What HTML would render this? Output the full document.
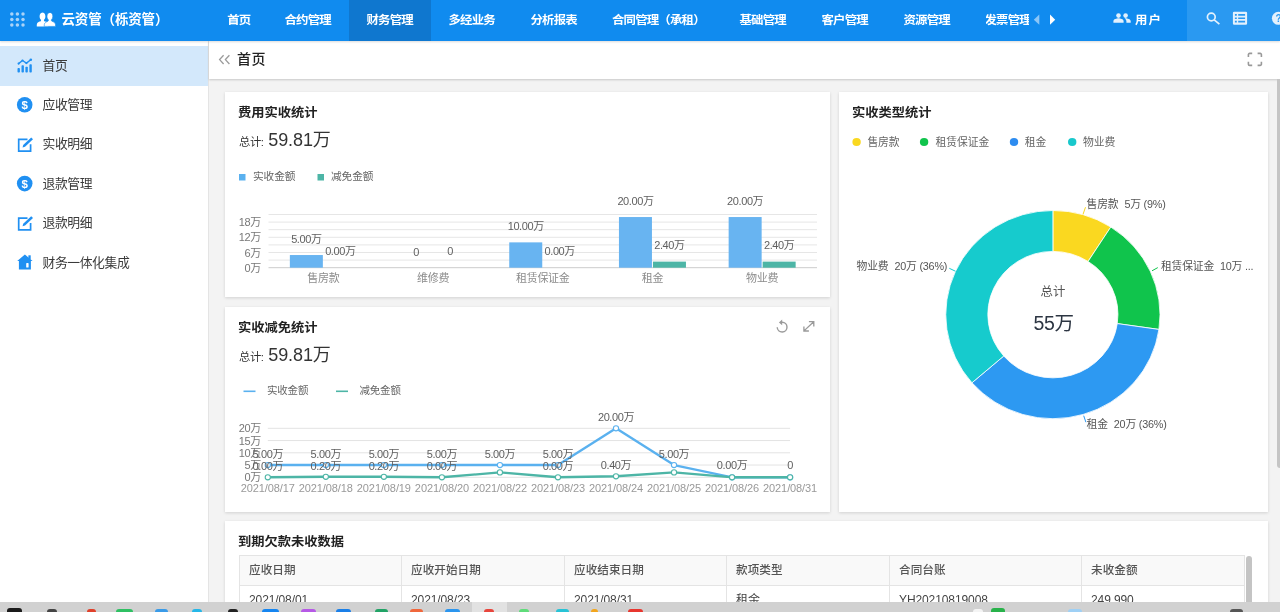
<!DOCTYPE html>
<html lang="zh-CN">
<head>
<meta charset="utf-8">
<title>云资管</title>
<style>
*{box-sizing:border-box;margin:0;padding:0}
html,body{-webkit-font-smoothing:antialiased;width:1280px;height:612px;overflow:hidden;background:#f3f3f3;font-family:"Liberation Sans","Noto Sans CJK SC",sans-serif;color:#333;}
#hdr{position:absolute;left:0;top:0;width:1280px;height:41px;background:#108bef;color:#fff;z-index:5;box-shadow:0 1px 2px rgba(0,0,0,.15)}
#hdr .nav{position:absolute;top:0;height:41px;line-height:39px;font-size:11.6px;font-weight:bold;letter-spacing:-0.75px;white-space:nowrap;text-align:center;}
#hdr .nav span{display:inline-block;transform:scaleX(1.07);transform-origin:50% 50%}
#hdr .act{background:#0f77cf;}
#hdr .right{position:absolute;left:1187px;top:0;width:93px;height:41px;background:#2a99f1;}
#brand{position:absolute;left:61.5px;top:0;height:41px;line-height:39px;font-size:13.5px;font-weight:bold;letter-spacing:-0.15px;white-space:nowrap}
#side{position:absolute;left:0;top:41px;width:208px;height:571px;background:#fff;}
#side .it{position:absolute;left:0;width:208px;height:39.5px;line-height:39.5px;padding-left:42.5px;font-size:12.8px;color:#3a3a3a;letter-spacing:-0.4px;white-space:nowrap}
#side .it.on{background:#d3e8fb;}
#sideshadow{position:absolute;left:208px;top:41px;width:1px;height:571px;background:#e4e4e4}
#tbar{position:absolute;left:209px;top:41px;width:1071px;height:38px;background:#fff;box-shadow:0 1px 2px rgba(0,0,0,.18);}
#tbar .t{position:absolute;left:28px;top:0;line-height:37px;font-size:14px;font-weight:500;color:#222;letter-spacing:0.5px}
#tbar .c{position:absolute;left:10px;top:0;line-height:34px;font-size:15px;color:#999;}
.card{position:absolute;background:#fff;box-shadow:0 1px 3px rgba(0,0,0,.14);}
.card h3{position:absolute;left:12.9px;top:11.5px;font-size:12.4px;font-weight:bold;color:#222;letter-spacing:0;transform:scaleX(1.07);transform-origin:0 50%;white-space:nowrap;line-height:18px}
.tot{position:absolute;left:14px;top:34.5px;white-space:nowrap;line-height:26px;color:#333}
.tot small{font-size:11.3px;letter-spacing:-0.4px;margin-right:2px}
.tot b{font-weight:normal;font-size:18px;letter-spacing:-0.1px}
svg text{font-family:"Liberation Sans","Noto Sans CJK SC",sans-serif}
#tbl{position:absolute;left:14px;top:34px;width:1014px;height:70px}
#tbl .th{position:absolute;top:0;height:31px;line-height:28px;padding-left:9px;background:#f9f9f9;border:1px solid #e4e4e4;font-size:11.6px;color:#555;font-weight:500;letter-spacing:0.05px;white-space:nowrap}
#tbl .td{position:absolute;top:30px;height:40px;line-height:29px;padding-left:9px;background:#fff;border:1px solid #e4e4e4;font-size:12px;color:#444;white-space:nowrap;letter-spacing:-0.1px}
#tscroll{position:absolute;left:1007px;top:1px;width:6px;height:70px;background:#c4c4c4;border-radius:3px 3px 0 0}
#root{position:absolute;left:0;top:0;width:1280px;height:612px;overflow:hidden;will-change:transform;transform:translateZ(0)}
#scroll{position:absolute;left:1276.7px;top:79px;width:4px;height:389px;background:#c5c5c5;border-radius:0 0 0 3px}
#task{position:absolute;left:0;top:602.4px;width:1280px;height:10px;background:#d1d1d1}
#task i{position:absolute;bottom:0;border-radius:3px 3px 0 0}
#task b{position:absolute;left:472px;top:0;width:35px;height:10px;background:#e2e2e2}
</style>
</head>
<body>
<div id="root">
<div id="hdr">
  <div id="brand">云资管（栎资管）</div>
  <div class="nav" style="left:212px;width:54px"><span>首页</span></div>
  <div class="nav" style="left:267px;width:82px"><span>合约管理</span></div>
  <div class="nav act" style="left:349px;width:82px"><span>财务管理</span></div>
  <div class="nav" style="left:431px;width:82px"><span>多经业务</span></div>
  <div class="nav" style="left:513px;width:82px"><span>分析报表</span></div>
  <div class="nav" style="left:597px;width:122px"><span>合同管理（承租）</span></div>
  <div class="nav" style="left:722px;width:82px"><span>基础管理</span></div>
  <div class="nav" style="left:804px;width:82px"><span>客户管理</span></div>
  <div class="nav" style="left:886px;width:82px"><span>资源管理</span></div>
  <div class="nav" style="left:985.5px;width:43.5px;overflow:hidden;text-align:left"><span>发票管理</span></div>
  <div class="nav" style="left:1135px;width:30px;text-align:left"><span style="letter-spacing:1px;transform-origin:0 50%">用户</span></div>
  <div class="right"></div>
  <svg id="hicons" width="1280" height="41" viewBox="0 0 1280 41" style="position:absolute;left:0;top:0;pointer-events:none">
    <g fill="#a9d3f8">
      <circle cx="11.8" cy="14.1" r="1.75"/><circle cx="17.4" cy="14.1" r="1.75"/><circle cx="23" cy="14.1" r="1.75"/>
      <circle cx="11.8" cy="19.5" r="1.75"/><circle cx="17.4" cy="19.5" r="1.75"/><circle cx="23" cy="19.5" r="1.75"/>
      <circle cx="11.8" cy="24.9" r="1.75"/><circle cx="17.4" cy="24.9" r="1.75"/><circle cx="23" cy="24.9" r="1.75"/>
    </g>
    <g fill="#fff">
      <path d="M42.2,12.4c2,0 3.2,1.6 3.2,3.8c0,1.6 -0.6,2.9 -1.5,3.7c0,0.9 0.4,1.3 1.4,1.7c2.2,0.9 2.9,1.6 2.9,4.8h-11.4c0,-3.2 0.7,-3.9 2.9,-4.8c1,-0.4 1.4,-0.8 1.4,-1.7c-0.9,-0.8 -1.5,-2.1 -1.5,-3.7c0,-2.2 1.2,-3.8 3.6,-3.8z"/>
      <path d="M49.6,12.4c2,0 3.2,1.6 3.2,3.8c0,1.6 -0.6,2.9 -1.5,3.7c0,0.9 0.4,1.3 1.4,1.7c2.2,0.9 2.9,1.6 2.9,4.8h-11.4c0,-3.2 0.7,-3.9 2.9,-4.8c1,-0.4 1.4,-0.8 1.4,-1.7c-0.9,-0.8 -1.5,-2.1 -1.5,-3.7c0,-2.2 1.2,-3.8 3.6,-3.8z" stroke="#108bef" stroke-width="0.6"/>
    </g>
    <path d="M1039.3,14.6 L1039.3,24.8 L1033.8,19.7 Z" fill="#8cc6f7"/>
    <path d="M1050,14.6 L1050,24.8 L1055.2,19.7 Z" fill="#fff"/>
    <g fill="#e3f1fd">
      <circle cx="1118.5" cy="15.6" r="2.3"/><circle cx="1125.6" cy="15.6" r="2.3"/>
      <path d="M1113.4,22.7v-1.6c0,-1.9 3.4,-2.8 5.1,-2.8c1.7,0 5.1,0.9 5.1,2.8v1.6z"/>
      <path d="M1125.6,18.3c-0.3,0 -0.6,0 -0.9,0.1c1,0.7 1.7,1.6 1.7,2.7v1.6h4.3v-1.6c0,-1.9 -3.4,-2.8 -5.1,-2.8z"/>
    </g>
    <g fill="none" stroke="#e3f1fd" stroke-width="1.7">
      <circle cx="1211.3" cy="17" r="3.9"/><path d="M1214.2,19.9 L1219.4,24.2" stroke-linecap="butt"/>
    </g>
    <path fill="#e3f1fd" fill-rule="evenodd" d="M1234.2,11.8h11.6a1.3,1.3 0 0 1 1.3,1.3v10.4a1.3,1.3 0 0 1 -1.3,1.3h-11.6a1.3,1.3 0 0 1 -1.3,-1.3v-10.4a1.3,1.3 0 0 1 1.3,-1.3z M1234.9,14h1.9v1.7h-1.9z M1238.2,14h6.9v1.7h-6.9z M1234.9,17.4h1.9v1.7h-1.9z M1238.2,17.4h6.9v1.7h-6.9z M1234.9,20.8h1.9v1.7h-1.9z M1238.2,20.8h6.9v1.7h-6.9z"/>
    <circle cx="1278.4" cy="18.3" r="6.5" fill="#e3f1fd"/>
    <text x="1275.6" y="22.2" font-size="10" font-weight="bold" fill="#2a99f1">?</text>
  </svg>
</div>
<div id="side">
  <div class="it on" style="top:5px">首页</div>
  <div class="it" style="top:44px">应收管理</div>
  <div class="it" style="top:83px">实收明细</div>
  <div class="it" style="top:123px">退款管理</div>
  <div class="it" style="top:162px">退款明细</div>
  <div class="it" style="top:202px">财务一体化集成</div>
<svg width="60" height="571" viewBox="0 41 60 571" style="position:absolute;left:0;top:0"><g fill="#2090f2"><rect x="17.5" y="68.1" width="2.4" height="4.5" rx="0.8"/><rect x="21.5" y="65.2" width="2.4" height="7.4" rx="0.8"/><rect x="25.4" y="66.7" width="2.4" height="5.9" rx="0.8"/><rect x="29.4" y="64.2" width="2.4" height="8.4" rx="0.8"/></g><path d="M18.6,63.6 L22.5,60.5 L26.4,63.1 L30.8,59.7" fill="none" stroke="#2090f2" stroke-width="1.4" stroke-linejoin="round" stroke-linecap="round"/><circle cx="18.6" cy="63.6" r="1.1" fill="#2090f2"/><circle cx="22.5" cy="60.5" r="1.1" fill="#2090f2"/><circle cx="26.4" cy="63.1" r="1.1" fill="#2090f2"/><circle cx="30.8" cy="59.7" r="1.3" fill="#2090f2"/><circle cx="24.7" cy="104.8" r="7.8" fill="#2090f2"/><text x="24.7" y="108.89999999999999" font-size="11.5" font-weight="bold" fill="#fff" text-anchor="middle">$</text><path d="M27.5,139.4 H18.7 V151.10000000000002 H30.6 V144.20000000000002" fill="none" stroke="#2090f2" stroke-width="1.7"/><path d="M22.6,147.4 L23.2,145.0 L31.2,137.4 L33,139.20000000000002 L25,146.8 Z" fill="#2090f2"/><circle cx="24.7" cy="183.6" r="7.8" fill="#2090f2"/><text x="24.7" y="187.7" font-size="11.5" font-weight="bold" fill="#fff" text-anchor="middle">$</text><path d="M27.5,218.2 H18.7 V229.9 H30.6 V223.0" fill="none" stroke="#2090f2" stroke-width="1.7"/><path d="M22.6,226.2 L23.2,223.79999999999998 L31.2,216.2 L33,218.0 L25,225.6 Z" fill="#2090f2"/><path d="M24.9,254.5 L32.6,261.1 L30.9,261.1 L30.9,269.4 L18.9,269.4 L18.9,261.1 L17.2,261.1 Z" fill="#2090f2"/><rect x="28.4" y="255.3" width="2.3" height="4" fill="#2090f2"/><rect x="26.2" y="263.1" width="2.4" height="4.4" rx="0.6" fill="#fff"/></svg>
</div>
<div id="sideshadow"></div>
<div id="tbar"><svg width="14" height="12" viewBox="0 0 14 12" style="position:absolute;left:9px;top:13px"><path d="M5.6,1.2 L1.6,5.6 L5.6,10 M11.4,1.2 L7.4,5.6 L11.4,10" fill="none" stroke="#9a9a9a" stroke-width="1.3"/></svg><span class="t">首页</span><svg width="16" height="15" viewBox="0 0 16 15" style="position:absolute;left:1037.5px;top:10.7px"><path d="M1.4,5 V2.6 a1.2,1.2 0 0 1 1.2,-1.2 H5.2 M10.6,1.4 H13.2 a1.2,1.2 0 0 1 1.2,1.2 V5 M14.4,9.8 V12.2 a1.2,1.2 0 0 1 -1.2,1.2 H10.6 M5.2,13.4 H2.6 a1.2,1.2 0 0 1 -1.2,-1.2 V9.8" fill="none" stroke="#999" stroke-width="1.6"/></svg></div>

<div class="card" id="c1" style="left:225px;top:92px;width:605px;height:205px">
  <h3>费用实收统计</h3>
  <div class="tot"><small>总计: </small><b>59.81万</b></div>
<svg width="605" height="205" viewBox="0 0 605 205" style="position:absolute;left:0;top:0">
<rect x="14" y="82" width="6.5" height="6.5" fill="#5ab1ef"/>
<text x="28" y="87.9" font-size="10.7" fill="#666" letter-spacing="-0.1">实收金额</text>
<rect x="92.5" y="82" width="6.5" height="6.5" fill="#4db5a6"/>
<text x="106" y="87.9" font-size="10.7" fill="#666" letter-spacing="-0.1">减免金额</text>
<line x1="43.5" x2="592" y1="175.70" y2="175.70" stroke="#ccc" stroke-width="1"/>
<line x1="43.5" x2="592" y1="168.10" y2="168.10" stroke="#e6e6e6" stroke-width="1"/>
<line x1="43.5" x2="592" y1="160.50" y2="160.50" stroke="#e6e6e6" stroke-width="1"/>
<line x1="43.5" x2="592" y1="152.90" y2="152.90" stroke="#e6e6e6" stroke-width="1"/>
<line x1="43.5" x2="592" y1="145.30" y2="145.30" stroke="#e6e6e6" stroke-width="1"/>
<line x1="43.5" x2="592" y1="137.70" y2="137.70" stroke="#e6e6e6" stroke-width="1"/>
<line x1="43.5" x2="592" y1="130.11" y2="130.11" stroke="#e6e6e6" stroke-width="1"/>
<line x1="43.5" x2="592" y1="122.51" y2="122.51" stroke="#e6e6e6" stroke-width="1"/>
<text x="36" y="179.70" font-size="11" fill="#777" text-anchor="end" letter-spacing="-0.3">0万</text>
<text x="36" y="164.50" font-size="11" fill="#777" text-anchor="end" letter-spacing="-0.3">6万</text>
<text x="36" y="149.30" font-size="11" fill="#777" text-anchor="end" letter-spacing="-0.3">12万</text>
<text x="36" y="134.11" font-size="11" fill="#777" text-anchor="end" letter-spacing="-0.3">18万</text>
<text x="98.35" y="189.9" font-size="11" fill="#8c8c8c" text-anchor="middle" letter-spacing="-0.3">售房款</text>
<rect x="64.85" y="163.03" width="33" height="12.66" fill="#68b4f1"/>
<text x="81.35" y="150.84" font-size="11" fill="#606060" text-anchor="middle" letter-spacing="-0.4">5.00万</text>
<text x="115.35" y="163.20" font-size="11" fill="#606060" text-anchor="middle" letter-spacing="-0.4">0.00万</text>
<text x="208.05" y="189.9" font-size="11" fill="#8c8c8c" text-anchor="middle" letter-spacing="-0.3">维修费</text>
<text x="191.05" y="163.50" font-size="11" fill="#606060" text-anchor="middle" letter-spacing="-0.4">0</text>
<text x="225.05" y="163.20" font-size="11" fill="#606060" text-anchor="middle" letter-spacing="-0.4">0</text>
<text x="317.75" y="189.9" font-size="11" fill="#8c8c8c" text-anchor="middle" letter-spacing="-0.3">租赁保证金</text>
<rect x="284.25" y="150.37" width="33" height="25.33" fill="#68b4f1"/>
<text x="300.75" y="138.17" font-size="11" fill="#606060" text-anchor="middle" letter-spacing="-0.4">10.00万</text>
<text x="334.75" y="163.20" font-size="11" fill="#606060" text-anchor="middle" letter-spacing="-0.4">0.00万</text>
<text x="427.45" y="189.9" font-size="11" fill="#8c8c8c" text-anchor="middle" letter-spacing="-0.3">租金</text>
<rect x="393.95" y="125.04" width="33" height="50.66" fill="#68b4f1"/>
<rect x="427.95" y="169.62" width="33" height="6.08" fill="#4db5a6"/>
<text x="410.45" y="112.84" font-size="11" fill="#606060" text-anchor="middle" letter-spacing="-0.4">20.00万</text>
<text x="444.45" y="157.12" font-size="11" fill="#606060" text-anchor="middle" letter-spacing="-0.4">2.40万</text>
<text x="537.15" y="189.9" font-size="11" fill="#8c8c8c" text-anchor="middle" letter-spacing="-0.3">物业费</text>
<rect x="503.65" y="125.04" width="33" height="50.66" fill="#68b4f1"/>
<rect x="537.65" y="169.62" width="33" height="6.08" fill="#4db5a6"/>
<text x="520.15" y="112.84" font-size="11" fill="#606060" text-anchor="middle" letter-spacing="-0.4">20.00万</text>
<text x="554.15" y="157.12" font-size="11" fill="#606060" text-anchor="middle" letter-spacing="-0.4">2.40万</text>
</svg>
</div>
<div class="card" id="c2" style="left:225px;top:307px;width:605px;height:205px">
  <h3>实收减免统计</h3>
  <div class="tot"><small>总计: </small><b>59.81万</b></div>
<svg width="605" height="205" viewBox="0 0 605 205" style="position:absolute;left:0;top:0">
<line x1="18.5" x2="30.5" y1="84.3" y2="84.3" stroke="#5ab1ef" stroke-width="1.6"/>
<text x="42" y="87" font-size="10.5" fill="#666" letter-spacing="-0.2">实收金额</text>
<line x1="111" x2="123" y1="84.3" y2="84.3" stroke="#4db5a6" stroke-width="1.6"/>
<text x="134.5" y="87" font-size="10.5" fill="#666" letter-spacing="-0.2">减免金额</text>
<line x1="42.8" x2="565.1" y1="170.30" y2="170.30" stroke="#e3e3e3" stroke-width="1"/>
<text x="36" y="174.30" font-size="11" fill="#777" text-anchor="end" letter-spacing="-0.3">0万</text>
<line x1="42.8" x2="565.1" y1="158.05" y2="158.05" stroke="#e3e3e3" stroke-width="1"/>
<text x="36" y="162.05" font-size="11" fill="#777" text-anchor="end" letter-spacing="-0.3">5万</text>
<line x1="42.8" x2="565.1" y1="145.80" y2="145.80" stroke="#e3e3e3" stroke-width="1"/>
<text x="36" y="149.80" font-size="11" fill="#777" text-anchor="end" letter-spacing="-0.3">10万</text>
<line x1="42.8" x2="565.1" y1="133.55" y2="133.55" stroke="#e3e3e3" stroke-width="1"/>
<text x="36" y="137.55" font-size="11" fill="#777" text-anchor="end" letter-spacing="-0.3">15万</text>
<line x1="42.8" x2="565.1" y1="121.30" y2="121.30" stroke="#e3e3e3" stroke-width="1"/>
<text x="36" y="125.30" font-size="11" fill="#777" text-anchor="end" letter-spacing="-0.3">20万</text>
<text x="42.80" y="185.3" font-size="11" fill="#999" text-anchor="middle" letter-spacing="-0.1">2021/08/17</text>
<text x="100.83" y="185.3" font-size="11" fill="#999" text-anchor="middle" letter-spacing="-0.1">2021/08/18</text>
<text x="158.87" y="185.3" font-size="11" fill="#999" text-anchor="middle" letter-spacing="-0.1">2021/08/19</text>
<text x="216.90" y="185.3" font-size="11" fill="#999" text-anchor="middle" letter-spacing="-0.1">2021/08/20</text>
<text x="274.93" y="185.3" font-size="11" fill="#999" text-anchor="middle" letter-spacing="-0.1">2021/08/22</text>
<text x="332.97" y="185.3" font-size="11" fill="#999" text-anchor="middle" letter-spacing="-0.1">2021/08/23</text>
<text x="391.00" y="185.3" font-size="11" fill="#999" text-anchor="middle" letter-spacing="-0.1">2021/08/24</text>
<text x="449.03" y="185.3" font-size="11" fill="#999" text-anchor="middle" letter-spacing="-0.1">2021/08/25</text>
<text x="507.07" y="185.3" font-size="11" fill="#999" text-anchor="middle" letter-spacing="-0.1">2021/08/26</text>
<text x="565.10" y="185.3" font-size="11" fill="#999" text-anchor="middle" letter-spacing="-0.1">2021/08/31</text>
<polyline points="42.80,158.05 100.83,158.05 158.87,158.05 216.90,158.05 274.93,158.05 332.97,158.05 391.00,121.30 449.03,158.05 507.07,170.30 565.10,170.30" fill="none" stroke="#5ab1ef" stroke-width="2.4" stroke-linejoin="round"/>
<polyline points="42.80,170.30 100.83,169.81 158.87,169.81 216.90,170.30 274.93,165.40 332.97,170.30 391.00,169.32 449.03,165.40 507.07,170.30 565.10,170.30" fill="none" stroke="#4db5a6" stroke-width="2.4" stroke-linejoin="round"/>
<circle cx="42.80" cy="158.05" r="2.6" fill="#fff" stroke="#5ab1ef" stroke-width="1.1"/>
<circle cx="100.83" cy="158.05" r="2.6" fill="#fff" stroke="#5ab1ef" stroke-width="1.1"/>
<circle cx="158.87" cy="158.05" r="2.6" fill="#fff" stroke="#5ab1ef" stroke-width="1.1"/>
<circle cx="216.90" cy="158.05" r="2.6" fill="#fff" stroke="#5ab1ef" stroke-width="1.1"/>
<circle cx="274.93" cy="158.05" r="2.6" fill="#fff" stroke="#5ab1ef" stroke-width="1.1"/>
<circle cx="332.97" cy="158.05" r="2.6" fill="#fff" stroke="#5ab1ef" stroke-width="1.1"/>
<circle cx="391.00" cy="121.30" r="2.6" fill="#fff" stroke="#5ab1ef" stroke-width="1.1"/>
<circle cx="449.03" cy="158.05" r="2.6" fill="#fff" stroke="#5ab1ef" stroke-width="1.1"/>
<circle cx="507.07" cy="170.30" r="2.6" fill="#fff" stroke="#5ab1ef" stroke-width="1.1"/>
<circle cx="565.10" cy="170.30" r="2.6" fill="#fff" stroke="#5ab1ef" stroke-width="1.1"/>
<circle cx="42.80" cy="170.30" r="2.6" fill="#fff" stroke="#4db5a6" stroke-width="1.1"/>
<circle cx="100.83" cy="169.81" r="2.6" fill="#fff" stroke="#4db5a6" stroke-width="1.1"/>
<circle cx="158.87" cy="169.81" r="2.6" fill="#fff" stroke="#4db5a6" stroke-width="1.1"/>
<circle cx="216.90" cy="170.30" r="2.6" fill="#fff" stroke="#4db5a6" stroke-width="1.1"/>
<circle cx="274.93" cy="165.40" r="2.6" fill="#fff" stroke="#4db5a6" stroke-width="1.1"/>
<circle cx="332.97" cy="170.30" r="2.6" fill="#fff" stroke="#4db5a6" stroke-width="1.1"/>
<circle cx="391.00" cy="169.32" r="2.6" fill="#fff" stroke="#4db5a6" stroke-width="1.1"/>
<circle cx="449.03" cy="165.40" r="2.6" fill="#fff" stroke="#4db5a6" stroke-width="1.1"/>
<circle cx="507.07" cy="170.30" r="2.6" fill="#fff" stroke="#4db5a6" stroke-width="1.1"/>
<circle cx="565.10" cy="170.30" r="2.6" fill="#fff" stroke="#4db5a6" stroke-width="1.1"/>
<text x="42.80" y="151.05" font-size="11" fill="#606060" text-anchor="middle" letter-spacing="-0.4">5.00万</text>
<text x="42.80" y="163.30" font-size="11" fill="#606060" text-anchor="middle" letter-spacing="-0.4">0.00万</text>
<text x="100.83" y="151.05" font-size="11" fill="#606060" text-anchor="middle" letter-spacing="-0.4">5.00万</text>
<text x="100.83" y="162.81" font-size="11" fill="#606060" text-anchor="middle" letter-spacing="-0.4">0.20万</text>
<text x="158.87" y="151.05" font-size="11" fill="#606060" text-anchor="middle" letter-spacing="-0.4">5.00万</text>
<text x="158.87" y="162.81" font-size="11" fill="#606060" text-anchor="middle" letter-spacing="-0.4">0.20万</text>
<text x="216.90" y="151.05" font-size="11" fill="#606060" text-anchor="middle" letter-spacing="-0.4">5.00万</text>
<text x="216.90" y="163.30" font-size="11" fill="#606060" text-anchor="middle" letter-spacing="-0.4">0.00万</text>
<text x="274.93" y="151.05" font-size="11" fill="#606060" text-anchor="middle" letter-spacing="-0.4">5.00万</text>
<text x="332.97" y="151.05" font-size="11" fill="#606060" text-anchor="middle" letter-spacing="-0.4">5.00万</text>
<text x="332.97" y="163.30" font-size="11" fill="#606060" text-anchor="middle" letter-spacing="-0.4">0.00万</text>
<text x="391.00" y="114.30" font-size="11" fill="#606060" text-anchor="middle" letter-spacing="-0.4">20.00万</text>
<text x="391.00" y="162.32" font-size="11" fill="#606060" text-anchor="middle" letter-spacing="-0.4">0.40万</text>
<text x="449.03" y="151.05" font-size="11" fill="#606060" text-anchor="middle" letter-spacing="-0.4">5.00万</text>
<text x="507.07" y="162.30" font-size="11" fill="#606060" text-anchor="middle" letter-spacing="-0.4">0.00万</text>
<text x="565.10" y="162.30" font-size="11" fill="#606060" text-anchor="middle" letter-spacing="-0.4">0</text>
<path d="M557,15.2 A4.9,4.9 0 1 1 552.2,20.3" fill="none" stroke="#9a9a9a" stroke-width="1.4"/>
<path d="M553.9,15.4 L557.2,12.5 L557.2,18.3 Z" fill="#9a9a9a"/>
<path d="M579,23.9 L588.7,14.7 M583.9,14.7 H588.8 V19.4 M578.9,19.4 V24 H583.9" fill="none" stroke="#9a9a9a" stroke-width="1.3"/>
</svg>
</div>
<div class="card" id="c3" style="left:839px;top:92px;width:429px;height:420px">
  <h3>实收类型统计</h3>
<svg width="429" height="420" viewBox="0 0 429 420" style="position:absolute;left:0;top:0">
<ellipse cx="17.6" cy="49.9" rx="4.2" ry="4" fill="#fad820"/>
<text x="28.4" y="53.5" font-size="10.8" fill="#666" letter-spacing="-0.1">售房款</text>
<ellipse cx="85.1" cy="49.9" rx="4.2" ry="4" fill="#10c44c"/>
<text x="96.6" y="53.5" font-size="10.8" fill="#666" letter-spacing="-0.1">租赁保证金</text>
<ellipse cx="175" cy="49.9" rx="4.2" ry="4" fill="#2d8cf0"/>
<text x="185.8" y="53.5" font-size="10.8" fill="#666" letter-spacing="-0.1">租金</text>
<ellipse cx="233.2" cy="49.9" rx="4.2" ry="4" fill="#19c8cc"/>
<text x="244" y="53.5" font-size="10.8" fill="#666" letter-spacing="-0.1">物业费</text>
<g transform="translate(213.9,222.6) scale(1.029,1)">
<path d="M0.00,-104.10 A104.1,104.1 0 0 1 56.28,-87.57 L34.17,-53.17 A63.2,63.2 0 0 0 0.00,-63.20 Z" fill="#fad820" stroke="#fff" stroke-width="0.8"/>
<path d="M56.28,-87.57 A104.1,104.1 0 0 1 103.04,14.81 L62.56,8.99 A63.2,63.2 0 0 0 34.17,-53.17 Z" fill="#10c44c" stroke="#fff" stroke-width="0.8"/>
<path d="M103.04,14.81 A104.1,104.1 0 0 1 -78.67,68.17 L-47.76,41.39 A63.2,63.2 0 0 0 62.56,8.99 Z" fill="#2d99f2" stroke="#fff" stroke-width="0.8"/>
<path d="M-78.67,68.17 A104.1,104.1 0 0 1 -0.00,-104.10 L-0.00,-63.20 A63.2,63.2 0 0 0 -47.76,41.39 Z" fill="#16cbcd" stroke="#fff" stroke-width="0.8"/>
</g>
<text x="213.9" y="204.2" font-size="12.4" fill="#555" text-anchor="middle">总计</text>
<text x="214.6" y="238.3" font-size="19.5" fill="#2c3542" text-anchor="middle" letter-spacing="-0.3">55万</text>
<text x="247.6" y="115.8" font-size="10.8" fill="#555" letter-spacing="-0.2" xml:space="preserve">售房款<tspan dx="6">5万 (9%)</tspan></text>
<text x="322" y="177.6" font-size="10.8" fill="#555" letter-spacing="-0.2" xml:space="preserve">租赁保证金<tspan dx="6">10万 ...</tspan></text>
<text x="17.6" y="177.6" font-size="10.8" fill="#555" letter-spacing="-0.2" xml:space="preserve">物业费<tspan dx="6">20万 (36%)</tspan></text>
<text x="247.6" y="335.5" font-size="10.8" fill="#555" letter-spacing="-0.2" xml:space="preserve">租金<tspan dx="6">20万 (36%)</tspan></text>
<line x1="244" y1="122.4" x2="246.5" y2="115.2" stroke="#fad820" stroke-width="1"/>
<line x1="313" y1="178.8" x2="318.8" y2="175.6" stroke="#10c44c" stroke-width="1"/>
<line x1="110.3" y1="176.3" x2="116.4" y2="179.2" stroke="#16cbcd" stroke-width="1"/>
<line x1="244.7" y1="323.7" x2="246.9" y2="330.2" stroke="#2d99f2" stroke-width="1"/>
</svg>
</div>
<div class="card" id="c4" style="left:225px;top:521px;width:1043px;height:100px">
  <h3>到期欠款未收数据</h3>
  <div id="tbl">
    <div class="th" style="left:0;width:163px">应收日期</div>
    <div class="th" style="left:162px;width:164px">应收开始日期</div>
    <div class="th" style="left:325px;width:163px">应收结束日期</div>
    <div class="th" style="left:487px;width:164px">款项类型</div>
    <div class="th" style="left:650px;width:193px">合同台账</div>
    <div class="th" style="left:842px;width:164px">未收金额</div>
    <div class="td" style="left:0;width:163px">2021/08/01</div>
    <div class="td" style="left:162px;width:164px">2021/08/23</div>
    <div class="td" style="left:325px;width:163px">2021/08/31</div>
    <div class="td cj" style="left:487px;width:164px">租金</div>
    <div class="td" style="left:650px;width:193px">YH20210819008</div>
    <div class="td" style="left:842px;width:164px">249,990</div>
    <div id="tscroll"></div>
  </div>
</div>
<div id="scroll"></div>
<div id="task"><b></b><i style="left:6.7px;width:15.1px;height:4.3px;background:#1a1a1a"></i><i style="left:47px;width:10px;height:3.7px;background:#444"></i><i style="left:86.7px;width:9.0px;height:3.9px;background:#e0402a"></i><i style="left:116px;width:16.7px;height:3.7px;background:#2fc063"></i><i style="left:154.5px;width:13.5px;height:3.9px;background:#3a9be8"></i><i style="left:191.5px;width:10.0px;height:3.5px;background:#25b7e8"></i><i style="left:228px;width:10px;height:3.9px;background:#222"></i><i style="left:262px;width:17px;height:3.9px;background:#1685f0"></i><i style="left:301px;width:15px;height:3.9px;background:#b659e6"></i><i style="left:336px;width:15px;height:3.7px;background:#1a7fe8"></i><i style="left:374.5px;width:13.5px;height:3.9px;background:#21a366"></i><i style="left:410px;width:13px;height:3.7px;background:#f0673c"></i><i style="left:445px;width:15px;height:3.7px;background:#2b95ee"></i><i style="left:484px;width:10px;height:3.5px;background:#e8453c"></i><i style="left:519px;width:10px;height:3.3px;background:#5fdc7a"></i><i style="left:556px;width:13px;height:3.7px;background:#27c3d6"></i><i style="left:591px;width:7px;height:3.5px;background:#f2a51d"></i><i style="left:628px;width:15px;height:3.7px;background:#e8362f"></i><i style="left:972.6px;width:10.1px;height:3.3px;background:#f4f4f4"></i><i style="left:991px;width:13.5px;height:4.3px;background:#28b24a"></i><i style="left:1068px;width:14px;height:3.5px;background:#9fd0f5"></i><i style="left:1229.6px;width:13.4px;height:3.3px;background:#555"></i></div>
</div>
</body>
</html>
